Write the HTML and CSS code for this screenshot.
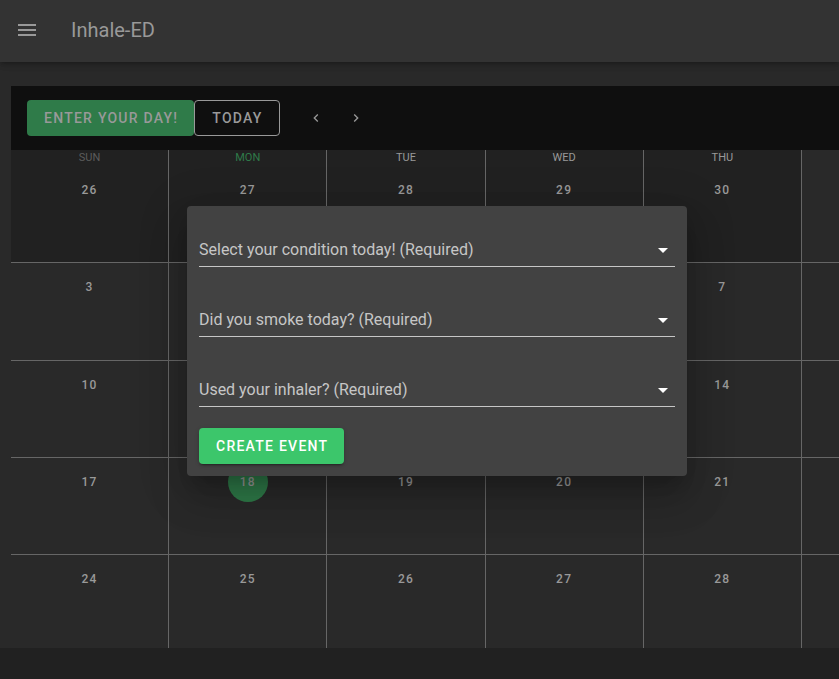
FILE: index.html
```html
<!DOCTYPE html>
<html lang="en">
<head>
<meta charset="utf-8">
<meta name="viewport" content="width=device-width, initial-scale=1">
<title>Inhale-ED</title>
<link rel="stylesheet" href="styles.css">
</head>
<body>
<header class="app-bar">
  <button class="icon-button" type="button" aria-label="Menu">
    <svg width="24" height="24" viewBox="0 0 24 24"><path d="M3 6h18v2H3V6m0 5h18v2H3v-2m0 5h18v2H3v-2z"/></svg>
  </button>
  <h1 class="app-title">Inhale-ED</h1>
</header>
<main class="content">
  <div class="toolbar">
    <button class="btn btn-enter" type="button">Enter your day!</button>
    <button class="btn btn-today" type="button">Today</button>
    <button class="nav-button nav-prev" type="button" aria-label="Previous month">
      <svg width="16" height="16" viewBox="0 0 24 24"><path d="M15.41 16.58 10.83 12l4.58-4.59L14 6l-6 6 6 6 1.41-1.42z"/></svg>
    </button>
    <button class="nav-button" type="button" aria-label="Next month">
      <svg width="16" height="16" viewBox="0 0 24 24"><path d="M8.59 16.58 13.17 12 8.59 7.41 10 6l6 6-6 6-1.41-1.42z"/></svg>
    </button>
  </div>
  <table class="calendar">
    <colgroup><col span="5"><col class="col-edge"></colgroup>
    <thead>
      <tr><th class="past">Sun</th><th class="current">Mon</th><th>Tue</th><th>Wed</th><th>Thu</th><td></td></tr>
    </thead>
    <tbody>
      <tr class="outside"><td><button type="button">26</button></td><td><button type="button">27</button></td><td><button type="button">28</button></td><td><button type="button">29</button></td><td><button type="button">30</button></td><td></td></tr>
      <tr><td><button type="button">3</button></td><td></td><td></td><td></td><td><button type="button">7</button></td><td></td></tr>
      <tr><td><button type="button">10</button></td><td></td><td></td><td></td><td><button type="button">14</button></td><td></td></tr>
      <tr><td><button type="button">17</button></td><td><button class="selected" type="button">18</button></td><td><button type="button">19</button></td><td><button type="button">20</button></td><td><button type="button">21</button></td><td></td></tr>
      <tr><td><button type="button">24</button></td><td><button type="button">25</button></td><td><button type="button">26</button></td><td><button type="button">27</button></td><td><button type="button">28</button></td><td></td></tr>
    </tbody>
  </table>
</main>
<form class="dialog">
  <div class="field">
    <select aria-label="Condition"><option>Select your condition today! (Required)</option></select>
    <svg class="caret" width="24" height="24" viewBox="0 0 24 24"><path d="M7 10l5 5 5-5H7z"/></svg>
  </div>
  <div class="field">
    <select aria-label="Smoking"><option>Did you smoke today? (Required)</option></select>
    <svg class="caret" width="24" height="24" viewBox="0 0 24 24"><path d="M7 10l5 5 5-5H7z"/></svg>
  </div>
  <div class="field">
    <select aria-label="Inhaler"><option>Used your inhaler? (Required)</option></select>
    <svg class="caret" width="24" height="24" viewBox="0 0 24 24"><path d="M7 10l5 5 5-5H7z"/></svg>
  </div>
  <button class="btn btn-create" type="button">Create event</button>
</form>
</body>
</html>
```

FILE: styles.css
```css
* {
  box-sizing: border-box;
}

body {
  margin: 0;
  min-height: 100vh;
  background: #212121;
  color: #999;
  font-family: Roboto, sans-serif;
  overflow-x: hidden;
}

button,
select {
  font-family: inherit;
  margin: 0;
}

svg {
  display: block;
  fill: currentColor;
}

.app-bar {
  position: relative;
  display: flex;
  align-items: center;
  gap: 20px;
  height: 62px;
  padding: 0 3px 2px;
  background: #333;
  box-shadow: 0 2px 4px -1px rgba(0, 0, 0, .2), 0 4px 5px rgba(0, 0, 0, .1), 0 1px 10px rgba(0, 0, 0, .08);
}

.icon-button {
  display: grid;
  place-items: center;
  width: 48px;
  height: 48px;
  padding: 0;
  border: 0;
  background: none;
  color: inherit;
}

.app-title {
  margin: 0;
  font-size: 20px;
  font-weight: 400;
  line-height: 30px;
}

.content {
  padding: 24px 0 0 11px;
  background: #292929;
}

.toolbar {
  display: flex;
  align-items: center;
  height: 64px;
  padding: 0 16px;
  background: #0f0f0f;
}

.btn {
  height: 36px;
  padding: 0 15px 0 16px;
  border: 1px solid transparent;
  border-radius: 4px;
  font-size: 14px;
  font-weight: 500;
  letter-spacing: 1.25px;
  text-transform: uppercase;
  white-space: nowrap;
}

.btn-enter {
  background: #2f7b49;
  color: #999;
}

.btn-today {
  padding: 0 16px 0 17px;
  border-color: #999;
  background: none;
  color: #999;
}

.nav-button {
  display: grid;
  place-items: center;
  width: 40px;
  height: 40px;
  padding: 0;
  border: 0;
  background: none;
  color: #999;
}

.nav-prev {
  margin-left: 16px;
}

.calendar {
  width: 100%;
  table-layout: fixed;
  border-collapse: separate;
  border-spacing: 0;
}

.col-edge {
  width: 37px;
}

.calendar th,
.calendar td {
  padding: 0;
  border-right: 1px solid #666;
  text-align: center;
}

.calendar td:last-child {
  border-right: 0;
}

.calendar th {
  height: 16px;
  background: #212121;
  font-size: 11px;
  font-weight: 400;
  line-height: 16px;
  text-transform: uppercase;
}

.calendar .past {
  color: #5c5c5c;
}

.calendar .current {
  color: #2f7b49;
}

.calendar tbody td {
  height: 97px;
  padding-top: 4px;
  border-bottom: 1px solid #666;
  vertical-align: top;
}

.calendar tbody tr:nth-child(2) td {
  height: 98px;
}

.calendar tbody tr:last-child td {
  height: 93px;
  border-bottom: 0;
}

.outside td:not(:last-child) {
  background: #212121;
}

.calendar button {
  width: 40px;
  height: 40px;
  padding: 0;
  border: 0;
  border-radius: 50%;
  background: none;
  color: #999;
  font-size: 12px;
  font-weight: 500;
  letter-spacing: 1.25px;
}

.calendar .selected {
  background: #2f7b49;
}

.dialog {
  position: absolute;
  top: 206px;
  left: 187px;
  width: 500px;
  padding: 12px;
  border-radius: 4px;
  background: #424242;
  box-shadow: 0 11px 15px -7px rgba(0, 0, 0, .2), 0 24px 38px 3px rgba(0, 0, 0, .14), 0 9px 46px 8px rgba(0, 0, 0, .12);
}

.field {
  position: relative;
  height: 70px;
  padding-top: 16px;
}

.field select {
  display: block;
  width: 100%;
  height: 33px;
  padding: 0;
  border: 0;
  border-bottom: 1px solid #c6c6c6;
  border-radius: 0;
  background: none;
  color: #c6c6c6;
  font-size: 16px;
  line-height: 32px;
  appearance: none;
}

.caret {
  position: absolute;
  top: 20px;
  right: 0;
  color: #fff;
  pointer-events: none;
}

.btn-create {
  display: block;
  background: #3cc66b;
  color: #fff;
  box-shadow: 0 3px 1px -2px rgba(0, 0, 0, .2), 0 2px 2px rgba(0, 0, 0, .14), 0 1px 5px rgba(0, 0, 0, .12);
}
```
